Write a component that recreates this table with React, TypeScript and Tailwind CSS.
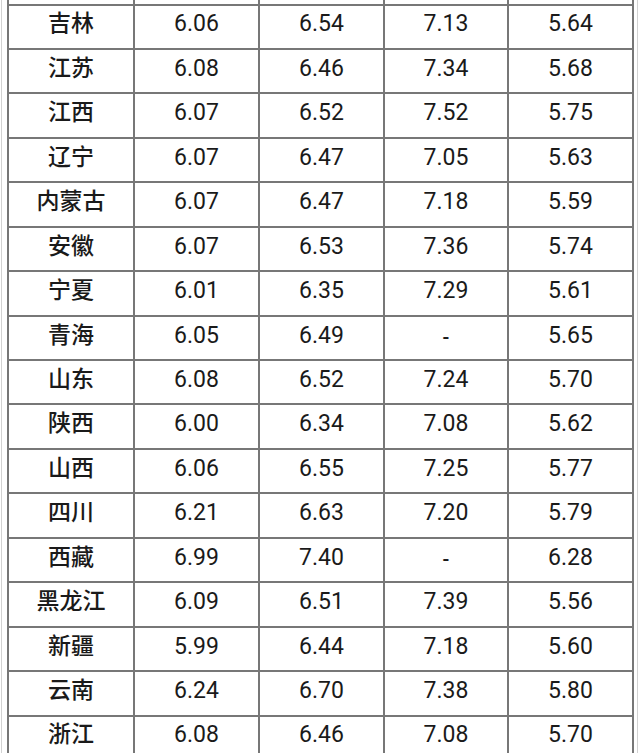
const rows: [string, string, string, string, string][] = [
  ["吉林", "6.06", "6.54", "7.13", "5.64"],
  ["江苏", "6.08", "6.46", "7.34", "5.68"],
  ["江西", "6.07", "6.52", "7.52", "5.75"],
  ["辽宁", "6.07", "6.47", "7.05", "5.63"],
  ["内蒙古", "6.07", "6.47", "7.18", "5.59"],
  ["安徽", "6.07", "6.53", "7.36", "5.74"],
  ["宁夏", "6.01", "6.35", "7.29", "5.61"],
  ["青海", "6.05", "6.49", "-", "5.65"],
  ["山东", "6.08", "6.52", "7.24", "5.70"],
  ["陕西", "6.00", "6.34", "7.08", "5.62"],
  ["山西", "6.06", "6.55", "7.25", "5.77"],
  ["四川", "6.21", "6.63", "7.20", "5.79"],
  ["西藏", "6.99", "7.40", "-", "6.28"],
  ["黑龙江", "6.09", "6.51", "7.39", "5.56"],
  ["新疆", "5.99", "6.44", "7.18", "5.60"],
  ["云南", "6.24", "6.70", "7.38", "5.80"],
  ["浙江", "6.08", "6.46", "7.08", "5.70"],
];

const widths = ["w-[126px]", "w-[125px]", "w-[125px]", "w-[124px]", "w-[125px]"];

function Row({ cells, partial }: { cells: string[]; partial?: boolean }) {
  return (
    <div className={`flex border-b-2 border-[#777777] ${partial ? "h-[5.5px]" : "h-[44.45px]"}`}>
      {cells.map((c, i) => (
        <div
          key={i}
          className={`${widths[i]} shrink-0 border-r-2 border-[#777777] flex items-center justify-center pb-[4px] ${
            i === 0 ? "font-medium text-[23px]" : c === "-" ? "text-[20px] font-medium pt-[3px]" : "text-[23px]"
          }`}
        >
          {c}
        </div>
      ))}
    </div>
  );
}

export default function App() {
  return (
    <div className="w-[640px] h-[753px] overflow-hidden bg-white text-[#1a1a1a] font-['Roboto','Noto_Sans_CJK_SC',sans-serif]">
      <div className="ml-[1px] w-[637px] h-full border-x border-[#d2d2d2] pl-[5px]">
        <div className="w-[627px] border-l-2 border-[#777777]">
          <Row cells={["", "", "", "", ""]} partial />
          {rows.map((r) => (
            <Row key={r[0]} cells={r} />
          ))}
        </div>
      </div>
    </div>
  );
}
